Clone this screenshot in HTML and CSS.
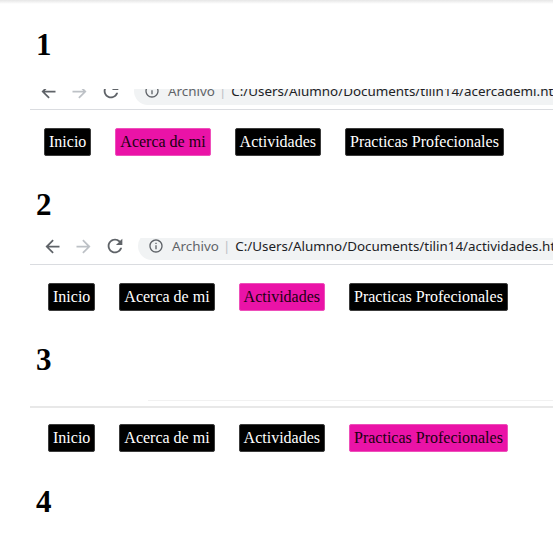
FILE: index.html
```html
<!DOCTYPE html>
<html lang="es">
<head>
<meta charset="utf-8">
<title>Capturas</title>
<link rel="stylesheet" href="styles.css">
</head>
<body>
<div class="topshade"></div>

<section class="panel panel-1">
  <h1 class="num">1</h1>
  <div class="shot shift">
    <div class="toolbar toolbar-clip">
      <div class="row">
        <svg class="ic ic-back" viewBox="0 0 24 24"><path d="M20 11H7.83l5.59-5.59L12 4l-8 8 8 8 1.41-1.41L7.83 13H20v-2z"/></svg>
        <svg class="ic ic-fwd" viewBox="0 0 24 24"><path d="M12 4l-1.41 1.41L16.17 11H4v2h12.17l-5.58 5.59L12 20l8-8z"/></svg>
        <svg class="ic ic-reload" viewBox="0 0 24 24"><path d="M17.65 6.35A7.958 7.958 0 0 0 12 4c-4.42 0-7.99 3.58-7.99 8s3.57 8 7.99 8c3.73 0 6.84-2.55 7.73-6h-2.08A5.99 5.99 0 0 1 12 18c-3.31 0-6-2.69-6-6s2.69-6 6-6c1.66 0 3.14.69 4.22 1.78L13 11h7V4l-2.35 2.35z"/></svg>
        <div class="omnibox">
          <svg class="ic-info" viewBox="0 0 24 24"><path d="M11 7h2v2h-2zm0 4h2v6h-2zm1-9C6.48 2 2 6.48 2 12s4.48 10 10 10 10-4.48 10-10S17.52 2 12 2zm0 18c-4.41 0-8-3.59-8-8s3.59-8 8-8 8 3.59 8 8-3.59 8-8 8z"/></svg>
          <span class="scheme">Archivo</span><span class="sep">|</span><span class="url">C:/Users/Alumno/Documents/tilin14/acercademi.html</span>
        </div>
      </div>
    </div>
    <nav class="menu">
      <a class="btn">Inicio</a>
      <a class="btn active">Acerca de mi</a>
      <a class="btn">Actividades</a>
      <a class="btn">Practicas Profecionales</a>
    </nav>
  </div>
</section>

<section class="panel panel-2">
  <h1 class="num">2</h1>
  <div class="shot">
    <div class="toolbar toolbar-full">
      <div class="row">
        <svg class="ic ic-back" viewBox="0 0 24 24"><path d="M20 11H7.83l5.59-5.59L12 4l-8 8 8 8 1.41-1.41L7.83 13H20v-2z"/></svg>
        <svg class="ic ic-fwd" viewBox="0 0 24 24"><path d="M12 4l-1.41 1.41L16.17 11H4v2h12.17l-5.58 5.59L12 20l8-8z"/></svg>
        <svg class="ic ic-reload" viewBox="0 0 24 24"><path d="M17.65 6.35A7.958 7.958 0 0 0 12 4c-4.42 0-7.99 3.58-7.99 8s3.57 8 7.99 8c3.73 0 6.84-2.55 7.73-6h-2.08A5.99 5.99 0 0 1 12 18c-3.31 0-6-2.69-6-6s2.69-6 6-6c1.66 0 3.14.69 4.22 1.78L13 11h7V4l-2.35 2.35z"/></svg>
        <div class="omnibox">
          <svg class="ic-info" viewBox="0 0 24 24"><path d="M11 7h2v2h-2zm0 4h2v6h-2zm1-9C6.48 2 2 6.48 2 12s4.48 10 10 10 10-4.48 10-10S17.52 2 12 2zm0 18c-4.41 0-8-3.59-8-8s3.59-8 8-8 8 3.59 8 8-3.59 8-8 8z"/></svg>
          <span class="scheme">Archivo</span><span class="sep">|</span><span class="url">C:/Users/Alumno/Documents/tilin14/actividades.html</span>
        </div>
      </div>
    </div>
    <nav class="menu">
      <a class="btn">Inicio</a>
      <a class="btn">Acerca de mi</a>
      <a class="btn active">Actividades</a>
      <a class="btn">Practicas Profecionales</a>
    </nav>
  </div>
</section>

<section class="panel panel-3">
  <h1 class="num">3</h1>
  <div class="shot">
    <div class="toolbar-stub"><div class="stub-edge"></div></div>
    <nav class="menu">
      <a class="btn">Inicio</a>
      <a class="btn">Acerca de mi</a>
      <a class="btn">Actividades</a>
      <a class="btn active">Practicas Profecionales</a>
    </nav>
  </div>
</section>

<section class="panel panel-4">
  <h1 class="num">4</h1>
</section>
</body>
</html>
```

FILE: styles.css
```css
html, body {
  margin: 0;
  padding: 0;
  background: #ffffff;
  overflow: hidden;
}

body {
  width: 553px;
  height: 548px;
  font-family: "Liberation Serif", "Times New Roman", serif;
  color: #000;
}

.topshade {
  height: 4px;
  background: linear-gradient(#e6e6e6, #ffffff);
}

.panel {
  display: flex;
  flex-direction: column;
}

.num {
  margin: 0;
  padding-left: 36px;
  font-family: "Liberation Serif", "Times New Roman", serif;
  font-weight: bold;
  font-size: 31px;
  line-height: 30px;
  height: 30px;
}

.panel-1 .num { margin-top: 26px; }
.panel-2 .num { margin-top: 34px; }
.panel-3 .num { margin-top: 34px; }
.panel-4 .num { margin-top: 35px; }

.shot {
  margin-left: 30px;
  display: flex;
  flex-direction: column;
}

/* browser toolbar strip */
.toolbar {
  overflow: hidden;
  border-bottom: 1px solid #dadce0;
}

.toolbar-clip {
  height: 20px;
  margin-top: 29px;
}

.toolbar-full {
  height: 26px;
  margin-top: 18px;
}

.row {
  display: flex;
  align-items: center;
  height: 28px;
  padding-left: 12px;
  gap: 10px;
  white-space: nowrap;
}

.toolbar-clip .row {
  margin-top: -12px;
}

.toolbar-full .row {
  margin-top: -6px;
}

.shift .row { padding-left: 8px; }

.ic {
  flex: none;
  width: 21px;
  height: 21px;
  fill: #5f6368;
}

.ic-fwd { fill: #bdc1c6; }

.ic-reload {
  width: 22px;
  height: 22px;
}

.omnibox {
  flex: 1;
  display: flex;
  align-items: center;
  height: 28px;
  margin-left: 2px;
  padding-left: 10px;
  border-radius: 14px 0 0 14px;
  background: #f1f3f4;
  font-family: "Noto Sans", "Open Sans", sans-serif;
  font-size: 13.4px;
  overflow: hidden;
}

.ic-info {
  flex: none;
  width: 16px;
  height: 16px;
  fill: #5f6368;
  margin-right: 8px;
}

.scheme { color: #5f6368; }

.sep {
  color: #bdc1c6;
  margin: 0 5px 0 4px;
}

.url { color: #202124; }

/* third strip: only the bottom edge survives */
.toolbar-stub {
  height: 11px;
  margin-top: 20px;
  border-bottom: 2px solid #e8e8e8;
}

.stub-edge {
  height: 5px;
  margin-left: 118px;
  border-bottom: 1px solid #f1f1f1;
}

/* navigation menu */
.menu {
  display: flex;
  gap: 24px;
  padding-left: 18px;
  margin-top: 18px;
}

.shift .menu { padding-left: 14px; }

.panel-3 .menu { margin-top: 16px; }

.btn {
  display: block;
  height: 26px;
  line-height: 26px;
  padding: 0 4px;
  border: 1px solid #3c3c3c;
  border-radius: 2px;
  background: #000;
  color: #fff;
  font-size: 16px;
  white-space: nowrap;
}

.btn.active {
  background: #ea13a7;
  border-color: #ee4fba;
  color: #1a0010;
}
```
